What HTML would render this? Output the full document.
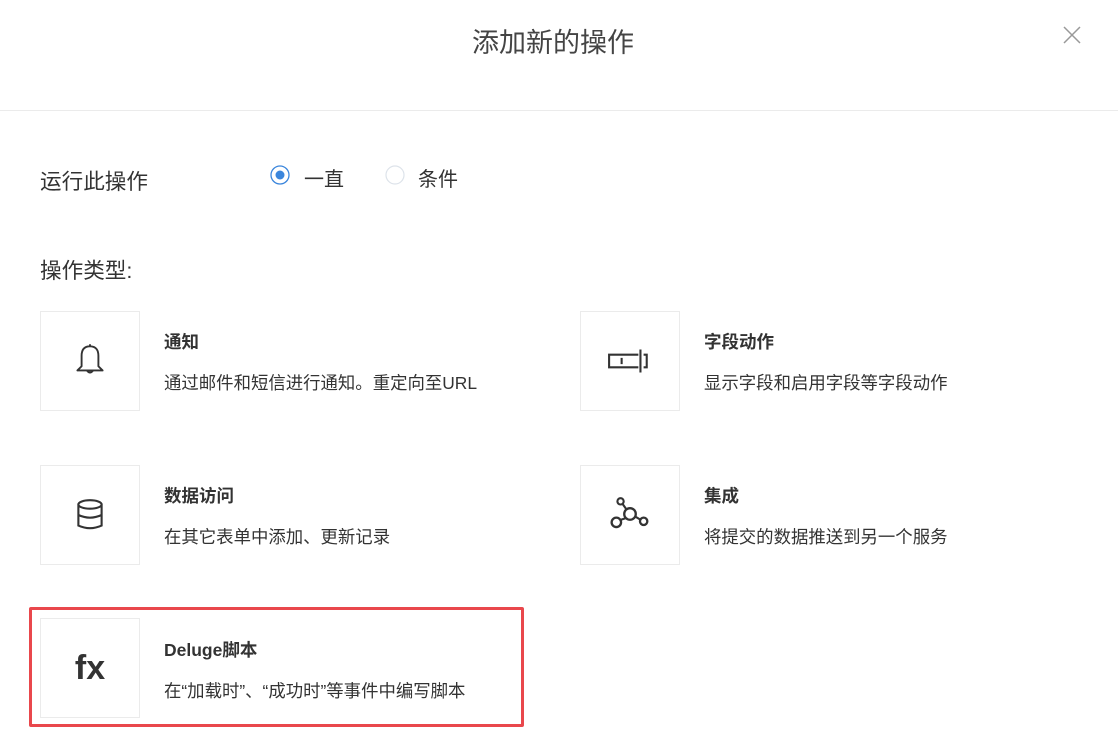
<!DOCTYPE html>
<html><head><meta charset="utf-8"><style>
*{margin:0;padding:0;box-sizing:border-box}
body{width:1118px;height:740px;background:#fff;font-family:"Liberation Sans","Noto Sans CJK SC",sans-serif;color:#333;position:relative;overflow:hidden}
.a{position:absolute;white-space:nowrap}
.box{position:absolute;width:100px;height:100px;border:1px solid #ebebeb;display:flex;align-items:center;justify-content:center}
.t{position:absolute;font-size:17.5px;font-weight:bold;color:#333;line-height:24px}
.d{position:absolute;font-size:17.4px;color:#333;line-height:24px}
</style></head><body>
<div class="a" style="left:0;width:1106px;top:25px;text-align:center;font-size:27px;color:#444;line-height:36px">添加新的操作</div>
<svg class="a" style="left:1063px;top:26px" width="18" height="18"><path d="M1 1L17 17M17 1L1 17" stroke="#999" stroke-width="1.5"/></svg>
<div class="a" style="left:0;top:110px;width:1118px;height:1px;background:#ebebeb"></div>

<div class="a" style="left:40px;top:167px;font-size:21.6px;line-height:30px">运行此操作</div>
<svg class="a" style="left:270px;top:165px" width="20" height="20"><circle cx="10" cy="10" r="9" fill="#fff" stroke="#3b86dc" stroke-width="1.3"/><circle cx="10" cy="10" r="4.5" fill="#3b86dc"/></svg>
<div class="a" style="left:304px;top:165px;font-size:20px;line-height:30px">一直</div>
<svg class="a" style="left:385px;top:165px" width="20" height="20"><circle cx="10" cy="10" r="9" fill="#fff" stroke="#dde3ea" stroke-width="1.2"/></svg>
<div class="a" style="left:418px;top:165px;font-size:20px;line-height:30px">条件</div>
<div class="a" style="left:40px;top:256px;font-size:21.6px;line-height:30px">操作类型:</div>

<div class="box" style="left:40px;top:311px"><svg width="36" height="42" viewBox="0 0 32 40"><path d="M16 6V4M16 6C10 6 8 10 8 15V25L4 29H28L24 25V15C24 10 22 6 16 6ZM13 29Q16 33 19 29" fill="none" stroke="#333" stroke-width="1.8" stroke-linejoin="round"/></svg></div>
<div class="t" style="left:164px;top:330px">通知</div>
<div class="d" style="left:164px;top:371px">通过邮件和短信进行通知。重定向至URL</div>

<div class="box" style="left:580px;top:311px"><svg width="46" height="34" viewBox="0 0 44 32"><path d="M30 10H2V22H30M14 13V19M35 10H38V22H35M32 5V27" fill="none" stroke="#333" stroke-width="2"/></svg></div>
<div class="t" style="left:704px;top:330px">字段动作</div>
<div class="d" style="left:704px;top:371px">显示字段和启用字段等字段动作</div>

<div class="box" style="left:40px;top:465px"><svg width="34" height="38" viewBox="0 0 32 36"><ellipse cx="16" cy="8" rx="11" ry="4" fill="none" stroke="#333" stroke-width="2"/><path d="M5 8V28Q16 33 27 28V8M5 18Q16 23 27 18" fill="none" stroke="#333" stroke-width="2"/></svg></div>
<div class="t" style="left:164px;top:484px">数据访问</div>
<div class="d" style="left:164px;top:525px">在其它表单中添加、更新记录</div>

<div class="box" style="left:580px;top:465px"><svg width="42" height="42" viewBox="0 0 40 40"><circle cx="11" cy="7" r="3" fill="none" stroke="#333" stroke-width="2"/><circle cx="20" cy="19" r="5.5" fill="none" stroke="#333" stroke-width="2.2"/><circle cx="7" cy="27" r="4.5" fill="none" stroke="#333" stroke-width="2.2"/><circle cx="33" cy="26" r="3.5" fill="none" stroke="#333" stroke-width="2.2"/><path d="M13 9.5L16.5 14.5M16 23L10 25M25 21.5L30 24.5" stroke="#333" stroke-width="2"/></svg></div>
<div class="t" style="left:704px;top:484px">集成</div>
<div class="d" style="left:704px;top:525px">将提交的数据推送到另一个服务</div>

<div class="a" style="left:29px;top:607px;width:495px;height:120px;border:3px solid #e9474c;border-radius:2px"></div>
<div class="box" style="left:40px;top:618px;font-size:34px;font-weight:bold;color:#333">fx</div>
<div class="t" style="left:164px;top:638px">Deluge脚本</div>
<div class="d" style="left:164px;top:679px">在“加载时”、“成功时”等事件中编写脚本</div>
</body></html>
